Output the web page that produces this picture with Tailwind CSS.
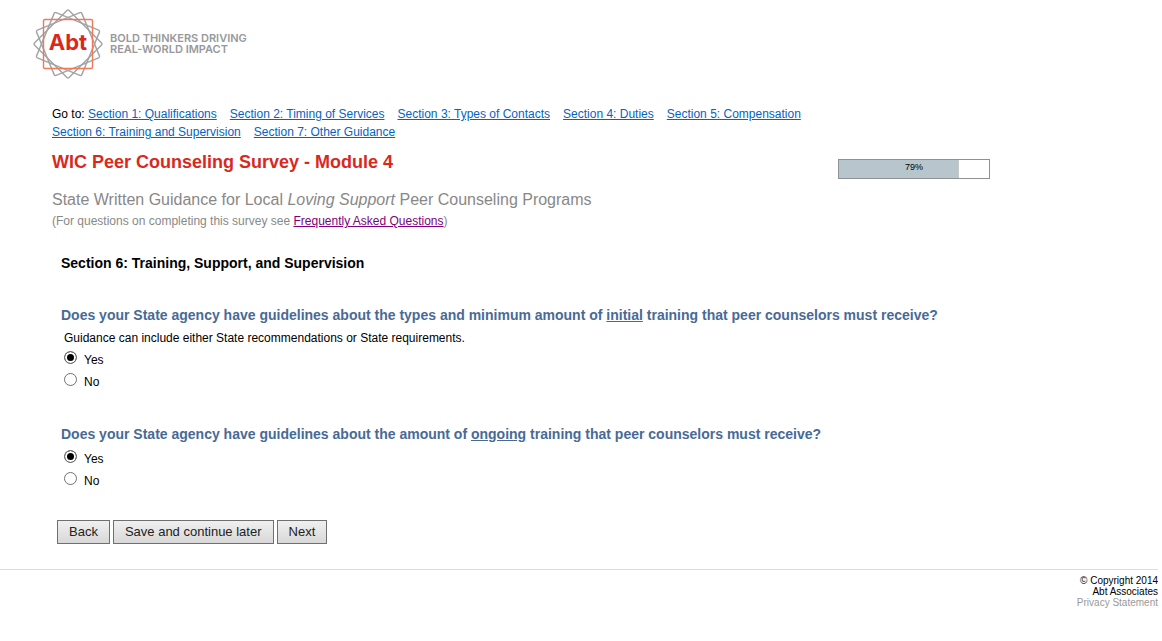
<!DOCTYPE html>
<html lang="en">
<head>
  <meta charset="UTF-8" />
  <meta name="viewport" content="width=device-width, initial-scale=1.0"/>
  <title>WIC Peer Counseling Survey - Module 4</title>
  <script src="https://cdn.jsdelivr.net/npm/@tailwindcss/browser@4"></script>
</head>
<body class="bg-white font-['Liberation_Sans',Arial,sans-serif] text-xs text-black">
  <header class="flex items-center gap-[6px] pl-8 pt-2">
    <svg class="w-18 h-18" viewBox="-36 -36 72 72" role="img" aria-label="Abt">
      <g fill="none" stroke="#a2a4a6" stroke-width="1.4">
        <rect x="-24.5" y="-24.5" width="49" height="49" rx="1.5" transform="rotate(22.5)"/>
        <rect x="-24.5" y="-24.5" width="49" height="49" rx="1.5" transform="rotate(45)"/>
        <rect x="-24.5" y="-24.5" width="49" height="49" rx="1.5" transform="rotate(67.5)"/>
      </g>
      <rect x="-24.5" y="-24.5" width="49" height="49" rx="1.5" fill="none" stroke="#ee7a5a" stroke-width="1.4"/>
      <text x="0" y="6" text-anchor="middle" class="font-['Inter',sans-serif] text-[22px] font-bold" fill="#da291c">Abt</text>
    </svg>
    <p class="font-['Inter',sans-serif] text-[11px] leading-[11px] font-semibold text-[#97999b]">BOLD THINKERS DRIVING<br/>REAL-WORLD IMPACT</p>
  </header>

  <main class="max-w-[990px] pl-[52px] pt-[25px]">
    <nav class="flex flex-wrap gap-x-[13px] max-w-[780px] leading-[18px] text-[#0563c1]">
      <span><span class="text-black">Go to:</span> <a href="#s1" class="underline">Section 1: Qualifications</a></span>
      <a href="#s2" class="underline">Section 2: Timing of Services</a>
      <a href="#s3" class="underline">Section 3: Types of Contacts</a>
      <a href="#s4" class="underline">Section 4: Duties</a>
      <a href="#s5" class="underline">Section 5: Compensation</a>
      <a href="#s6" class="underline">Section 6: Training and Supervision</a>
      <a href="#s7" class="underline">Section 7: Other Guidance</a>
    </nav>

    <div class="flex items-start justify-between pt-[7px]">
      <h1 class="text-lg leading-7 font-bold text-[#da291c]">WIC Peer Counseling Survey - Module 4</h1>
      <div class="relative mt-[11px] w-[152px] h-5 border border-[#8f9294]">
        <div class="h-full bg-[#b7c5cc] border-r border-[#c8c8c8]" style="width: 80%"></div>
        <span class="absolute inset-x-0 top-0 text-center text-[9px] leading-[14px]">79%</span>
      </div>
    </div>

    <h2 class="pt-[9px] text-base leading-6 text-[#888888]">State Written Guidance for Local <em>Loving Support</em> Peer Counseling Programs</h2>
    <p class="leading-[18px] text-[#888888]">(For questions on completing this survey see <a href="#faq" class="underline text-[#800080]">Frequently Asked Questions</a>)</p>

    <h3 class="pl-[9px] pt-[23px] text-sm leading-5 font-bold">Section 6: Training, Support, and Supervision</h3>

    <form>
      <fieldset class="pl-[9px] pt-8">
        <legend class="contents"><span class="block text-sm leading-5 font-bold text-[#486a96]">Does your State agency have guidelines about the types and minimum amount of <u>initial</u> training that peer counselors must receive?</span></legend>
        <p class="pl-[3px] pt-1 leading-[18px]">Guidance can include either State recommendations or State requirements.</p>
        <div class="flex flex-col pl-[3px]">
          <label class="flex items-start gap-[7px] pt-1 leading-[18px]"><input type="radio" name="initial" value="yes" checked class="size-[13px] appearance-none rounded-full border border-[#707070] bg-white checked:bg-black checked:shadow-[inset_0_0_0_2px_white]"/><span>Yes</span></label>
          <label class="flex items-start gap-[7px] pt-1 leading-[18px]"><input type="radio" name="initial" value="no" class="size-[13px] appearance-none rounded-full border border-[#707070] bg-white checked:bg-black checked:shadow-[inset_0_0_0_2px_white]"/><span>No</span></label>
        </div>
      </fieldset>

      <fieldset class="pl-[9px] pt-[33px]">
        <legend class="contents"><span class="block text-sm leading-5 font-bold text-[#486a96]">Does your State agency have guidelines about the amount of <u>ongoing</u> training that peer counselors must receive?</span></legend>
        <div class="flex flex-col pl-[3px] pt-[2px]">
          <label class="flex items-start gap-[7px] pt-1 leading-[18px]"><input type="radio" name="ongoing" value="yes" checked class="size-[13px] appearance-none rounded-full border border-[#707070] bg-white checked:bg-black checked:shadow-[inset_0_0_0_2px_white]"/><span>Yes</span></label>
          <label class="flex items-start gap-[7px] pt-1 leading-[18px]"><input type="radio" name="ongoing" value="no" class="size-[13px] appearance-none rounded-full border border-[#707070] bg-white checked:bg-black checked:shadow-[inset_0_0_0_2px_white]"/><span>No</span></label>
        </div>
      </fieldset>

      <div class="flex gap-[3px] pl-[5px] pt-[30px] text-[13px] leading-[22px] text-[#222222]">
        <button type="button" class="px-[11px] border border-[#707070] bg-linear-to-b from-[#f0f0f0] to-[#d8d8d8]">Back</button>
        <button type="button" class="px-[11px] border border-[#707070] bg-linear-to-b from-[#f0f0f0] to-[#d8d8d8]">Save and continue later</button>
        <button type="submit" class="px-[11px] border border-[#707070] bg-linear-to-b from-[#f0f0f0] to-[#d8d8d8]">Next</button>
      </div>
    </form>
  </main>

  <footer class="mr-1 mt-[25px] pt-[5px] border-t border-[#dddddd] text-right text-[10px] leading-[11px]">
    <p>© Copyright 2014<br/>Abt Associates</p>
    <a href="#privacy" class="text-[#999999]">Privacy Statement</a>
  </footer>
</body>
</html>
